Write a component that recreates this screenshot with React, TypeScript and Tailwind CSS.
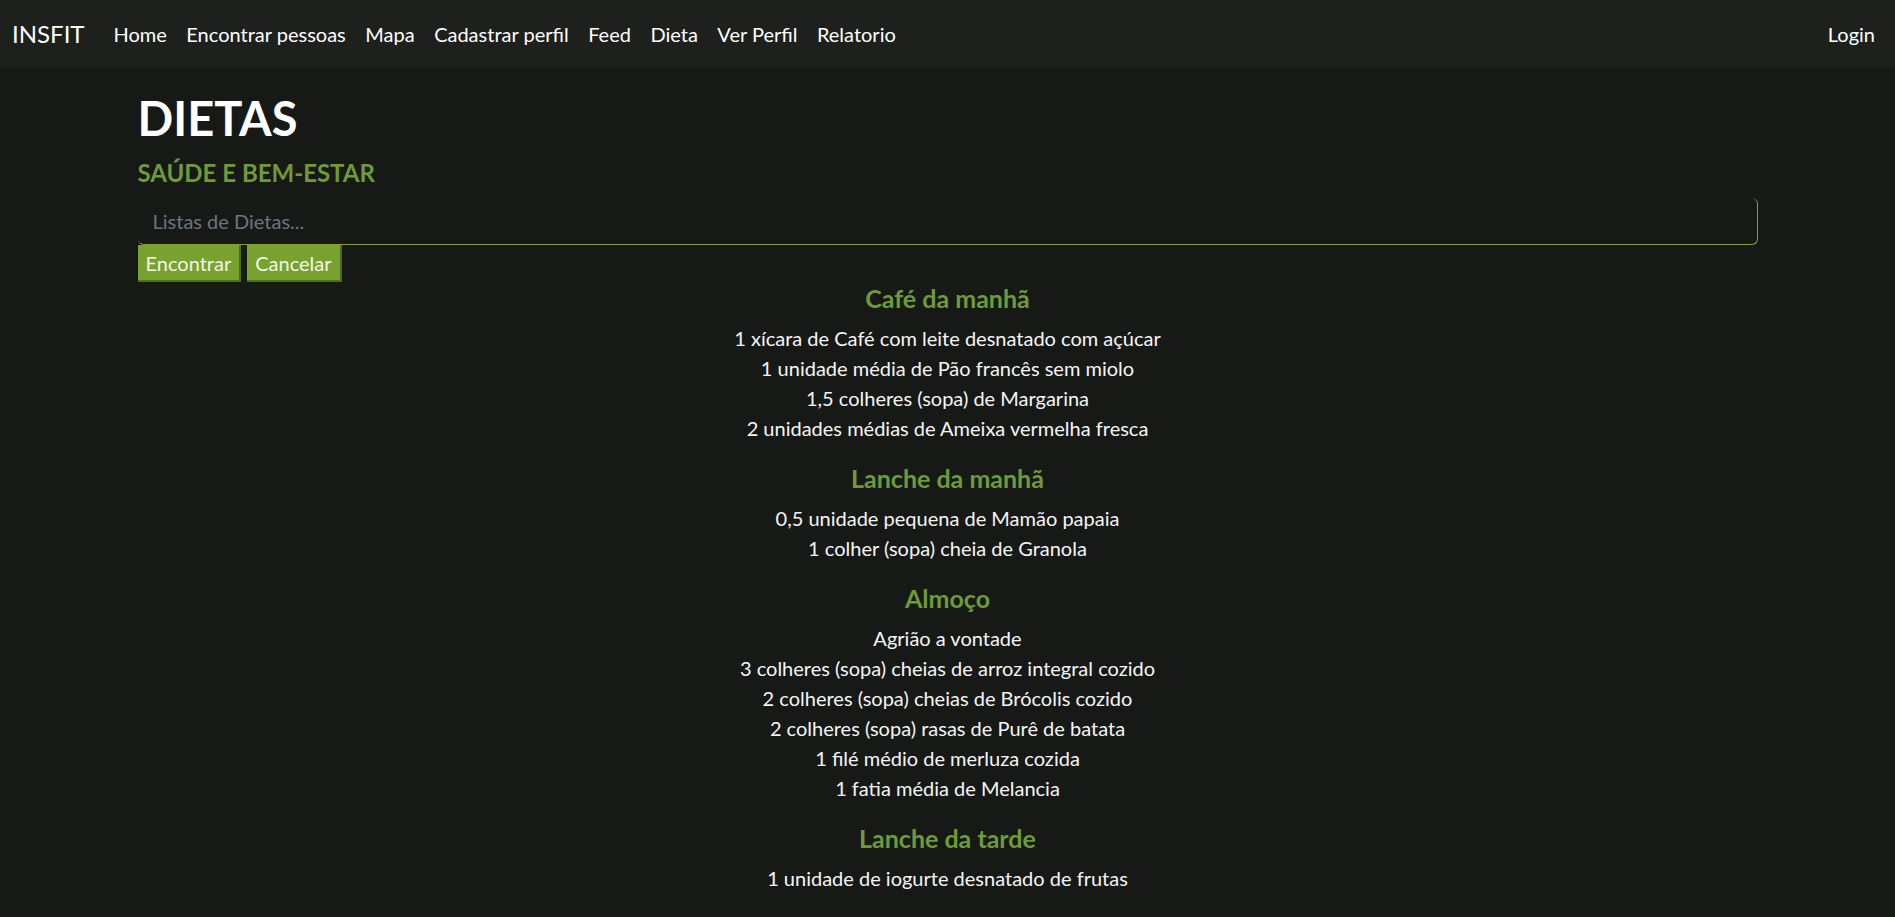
import React from "react";

const links = ["Home", "Encontrar pessoas", "Mapa", "Cadastrar perfil", "Feed", "Dieta", "Ver Perfil", "Relatorio"];

const sections: { title: string; items: string[] }[] = [
  {
    title: "Café da manhã",
    items: [
      "1 xícara de Café com leite desnatado com açúcar",
      "1 unidade média de Pão francês sem miolo",
      "1,5 colheres (sopa) de Margarina",
      "2 unidades médias de Ameixa vermelha fresca",
    ],
  },
  {
    title: "Lanche da manhã",
    items: ["0,5 unidade pequena de Mamão papaia", "1 colher (sopa) cheia de Granola"],
  },
  {
    title: "Almoço",
    items: [
      "Agrião a vontade",
      "3 colheres (sopa) cheias de arroz integral cozido",
      "2 colheres (sopa) cheias de Brócolis cozido",
      "2 colheres (sopa) rasas de Purê de batata",
      "1 filé médio de merluza cozida",
      "1 fatia média de Melancia",
    ],
  },
  {
    title: "Lanche da tarde",
    items: ["1 unidade de iogurte desnatado de frutas"],
  },
];

export default function App() {
  return (
    <div
      className="min-h-[917px] bg-[#171917] text-[#f5f5f5] text-[20px] leading-[30px]"
      style={{ fontFamily: '"Segoe UI", Lato, "Noto Sans", sans-serif' }}
    >
      <nav className="h-[68px] bg-[#1e201d] flex items-center pl-[12px] pr-[20px]">
        <span className="text-[24px] text-white mr-[29px]">INSFIT</span>
        <div className="flex items-center gap-[19.5px]">
          {links.map((l) => (
            <span key={l} className="text-white">{l}</span>
          ))}
        </div>
        <span className="ml-auto text-white">Login</span>
      </nav>
      <div className="w-[1650px] mx-auto px-[15px]">
        <h1 className="text-[47px] leading-[60px] font-bold text-white mt-[20px] mb-[10px]">DIETAS</h1>
        <h5 className="text-[24px] leading-[30px] font-bold text-[#6e9b37] mb-[10px]">SAÚDE E BEM-ESTAR</h5>
        <div className="h-[47px] border-b border-r border-[#7fa046] rounded-[6px] flex items-center px-[15px]">
          <span className="text-[#6c757d]">Listas de Dietas...</span>
        </div>
        <div className="flex gap-[6px] h-[37px]">
          <button className="bg-[#78a22f] text-[#f2f7e8] px-[8px] border-r-2 border-b-2 border-[#4f6d1e] leading-[34px]">Encontrar</button>
          <button className="bg-[#78a22f] text-[#f2f7e8] px-[8px] border-r-2 border-b-2 border-[#4f6d1e] leading-[34px]">Cancelar</button>
        </div>
        <div className="flex flex-col items-center text-center mt-[1px]">
          {sections.map((s) => (
            <div key={s.title} className="mb-[20px] flex flex-col items-center">
              <h3 className="text-[25px] leading-[30px] font-bold text-[#6e9b37] mb-[10px]">{s.title}</h3>
              {s.items.map((i) => (
                <p key={i}>{i}</p>
              ))}
            </div>
          ))}
        </div>
      </div>
    </div>
  );
}
